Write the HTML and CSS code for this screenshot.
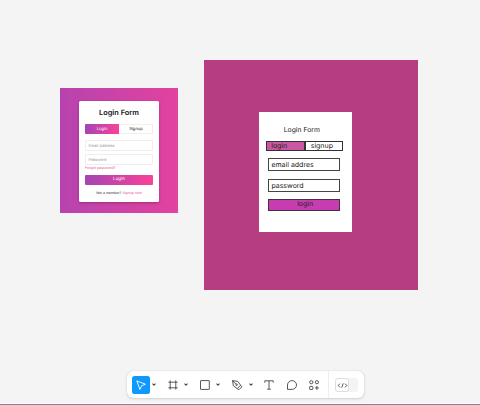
FILE: index.html
```html
<!DOCTYPE html>
<html lang="en">
<head>
<meta charset="utf-8">
<title>Login Form design</title>
<link rel="stylesheet" href="styles.css">
</head>
<body>
<main class="canvas">
  <section class="frame sample">
    <div class="sample-card">
      <h1 class="sample-title">Login Form</h1>
      <div class="sample-tabs"><span class="sample-tab active">Login</span><span class="sample-tab">Signup</span></div>
      <div class="sample-input email">Email Address</div>
      <div class="sample-input">Password</div>
      <div class="forgot">Forgot password?</div>
      <div class="sample-button">Login</div>
      <div class="member">Not a member? <span>Signup now</span></div>
    </div>
  </section>
  <section class="frame draft">
    <div class="draft-card">
      <h2 class="draft-title">Login Form</h2>
      <div class="draft-tabs"><span class="draft-tab active">login</span><span class="draft-tab">signup</span></div>
      <div class="draft-input">email addres</div>
      <div class="draft-input">password</div>
      <div class="draft-button">login</div>
    </div>
  </section>
  <nav class="toolbar">
    <span class="tool selected"><svg width="18" height="18" viewBox="0 0 18 18"><path d="M4.8 4.9 13.4 8.2 9.6 9.8 7.9 13.5Z"/></svg></span>
    <span class="caret"><svg width="4" height="3" viewBox="0 0 4 3"><path d="M.5.6 2 2.1 3.5.6"/></svg></span>
    <span class="tool"><svg width="18" height="18" viewBox="0 0 18 18"><path d="M6.2 4.4v9.2M11.8 4.4v9.2M4.4 6.2h9.2M4.4 11.8h9.2"/></svg></span>
    <span class="caret"><svg width="4" height="3" viewBox="0 0 4 3"><path d="M.5.6 2 2.1 3.5.6"/></svg></span>
    <span class="tool"><svg width="18" height="18" viewBox="0 0 18 18"><rect x="4.5" y="4.6" width="8.8" height="8.8" rx=".4"/></svg></span>
    <span class="caret"><svg width="4" height="3" viewBox="0 0 4 3"><path d="M.5.6 2 2.1 3.5.6"/></svg></span>
    <span class="tool"><svg width="18" height="18" viewBox="0 0 18 18"><path d="M4.5 4.6 9.8 5.4 12.6 9.2 9.2 12.6 5.4 9.8Z M4.5 4.6 8.1 8.2M12.6 9.2l1.2 1.7-2.8 2.8-1.8-1.1"/><circle cx="8.6" cy="8.7" r=".8"/></svg></span>
    <span class="caret"><svg width="4" height="3" viewBox="0 0 4 3"><path d="M.5.6 2 2.1 3.5.6"/></svg></span>
    <span class="tool"><svg width="18" height="18" viewBox="0 0 18 18"><path d="M4.8 6.6V4.8h8.4v1.8M9 4.8v8.4M7.2 13.2h3.6"/></svg></span>
    <span class="tool comment"><svg width="18" height="18" viewBox="0 0 18 18"><path d="M4.5 13.4V9a4.5 4.4 0 1 1 4.5 4.4Z"/></svg></span>
    <span class="tool actions"><svg width="18" height="18" viewBox="0 0 18 18"><circle cx="6.3" cy="6.2" r="1.6"/><circle cx="11.9" cy="6.2" r="1.6"/><rect x="4.7" y="10.4" width="3.1" height="3.1" rx=".5"/><path d="M11.9 9.9v4M9.9 11.9h4"/></svg></span>
    <span class="dev"><span class="switch"><span class="knob"><svg width="13" height="13" viewBox="0 0 13 13"><path d="M4 4.6 2.2 6.5 4 8.4M9 4.6l1.8 1.9L9 8.4M7.2 4.4 5.8 8.6"/></svg></span></span></span>
  </nav>
</main>
<footer class="edge"></footer>
</body>
</html>
```
FILE: styles.css
```css
* { box-sizing: border-box; }
body {
  margin: 0;
  height: 405px;
  overflow: hidden;
  display: flex;
  flex-direction: column;
  background: #f4f4f4;
  font-family: Inter, "Liberation Sans", sans-serif;
  text-rendering: geometricPrecision;
}
h1, h2 { margin: 0; }
svg { display: block; fill: none; stroke: #454545; stroke-width: .9; stroke-linejoin: round; }
.canvas { position: relative; flex: 1; }
.edge { height: 2px; background: #fff; border-bottom: 1px solid #858585; }
.frame { position: absolute; }

/* Gradient login sample */
.sample {
  left: 60px; top: 88px;
  width: 118.3px; height: 124.8px;
  padding: 13px 19px;
  background: linear-gradient(90deg, #b743ae, #e342a0);
}
.sample-card {
  width: 80px; height: 101px;
  padding: 6px 6px 0;
  border-radius: 1.5px;
  background: #fff;
  box-shadow: 0 1px 3px #0004;
  font-size: 3.9px;
  white-space: nowrap;
}
.sample-title { height: 11px; margin-bottom: 6px; text-align: center; font: 600 7.4px/11px Inter, sans-serif; color: #111; }
.sample-tabs { display: flex; height: 10px; border-radius: 1px; line-height: 9.6px; text-align: center; color: #111; font-size: 4.1px; box-shadow: inset 0 0 0 .6px #e2e2e2; }
.sample-tab { flex: 1; }
.sample-tab.active { color: #fff; border-radius: 1px 0 0 1px; }
.sample-tab.active, .sample-button { background: linear-gradient(90deg, #a445b2, #fa4299); }
.sample-input { height: 11px; padding-left: 2.4px; border: 1px solid #eee; border-radius: 1px; line-height: 9px; color: #999; margin-bottom: 3px; }
.sample-input.email { margin-top: 6px; }
.forgot { margin-top: -2.6px; height: 6px; line-height: 6px; color: #e85898; font-size: 3.6px; }
.sample-button { margin-top: 3.6px; height: 10px; border-radius: 1px; line-height: 10.5px; text-align: center; font-size: 4.5px; color: #fff; }
.member { margin-top: 5px; height: 7px; line-height: 7px; text-align: center; color: #333; font-size: 3.5px; }
.member span { color: #e85898; }

/* Draft frame */
.draft {
  left: 204.3px; top: 60.4px;
  width: 213.5px; height: 229.2px;
  padding: 51.6px 54.3px 0;
  background: #b53d80;
}
.draft-card {
  width: 93.4px; height: 119.6px;
  padding: 12px 12px 0 9.4px;
  background: #fff;
  color: #222;
  font-size: 7px;
  white-space: nowrap;
}
.draft-title { height: 12px; margin: 0 0 5.5px 15.8px; font: 400 6.8px/12px Inter, sans-serif; }
.draft-tabs { display: flex; width: 77px; margin-left: -2.4px; height: 10px; }
.draft-tab { width: 37.5px; padding-left: 4.6px; border: 1px solid #333; line-height: 8px; }
.draft-tab.active { width: 39.5px; background: #c957a3; }
.draft-input { width: 72.4px; height: 13px; margin-top: 7px; padding-left: 2.4px; border: 1px solid #444; line-height: 12px; }
.draft-input + .draft-input { margin-top: 8px; }
.draft-button { width: 72.4px; height: 11.5px; margin-top: 7px; padding-left: 2px; border: 1px solid #443044; background: #c73db0; text-align: center; line-height: 8.5px; }

/* Toolbar */
.toolbar {
  position: absolute;
  left: 127px; top: 371px;
  width: 237px; height: 27px;
  display: flex;
  align-items: center;
  padding-left: 4.5px;
  border-radius: 6px;
  background: #fff;
  box-shadow: 0 1px 3px #0002, 0 0 1px #0003;
}
.tool { width: 18px; height: 18px; border-radius: 2.5px; flex: none; }
.selected { background: #0d99ff; }
.selected svg { stroke: #fff; }
.caret { width: 14.1px; padding: 0 0 0 2.8px; }
.caret svg { stroke-width: 1.1; }
.comment, .actions { margin-left: 4.7px; }
.dev { display: flex; align-items: center; align-self: stretch; margin-left: 5px; padding-left: 5.8px; border-left: 1px solid #eee; }
.switch { width: 23px; height: 14px; border-radius: 3px; background: #f4f4f4; }
.knob { display: block; width: 13.5px; height: 14px; border: .5px solid #ddd; border-radius: 3px; background: #fff; }
```
